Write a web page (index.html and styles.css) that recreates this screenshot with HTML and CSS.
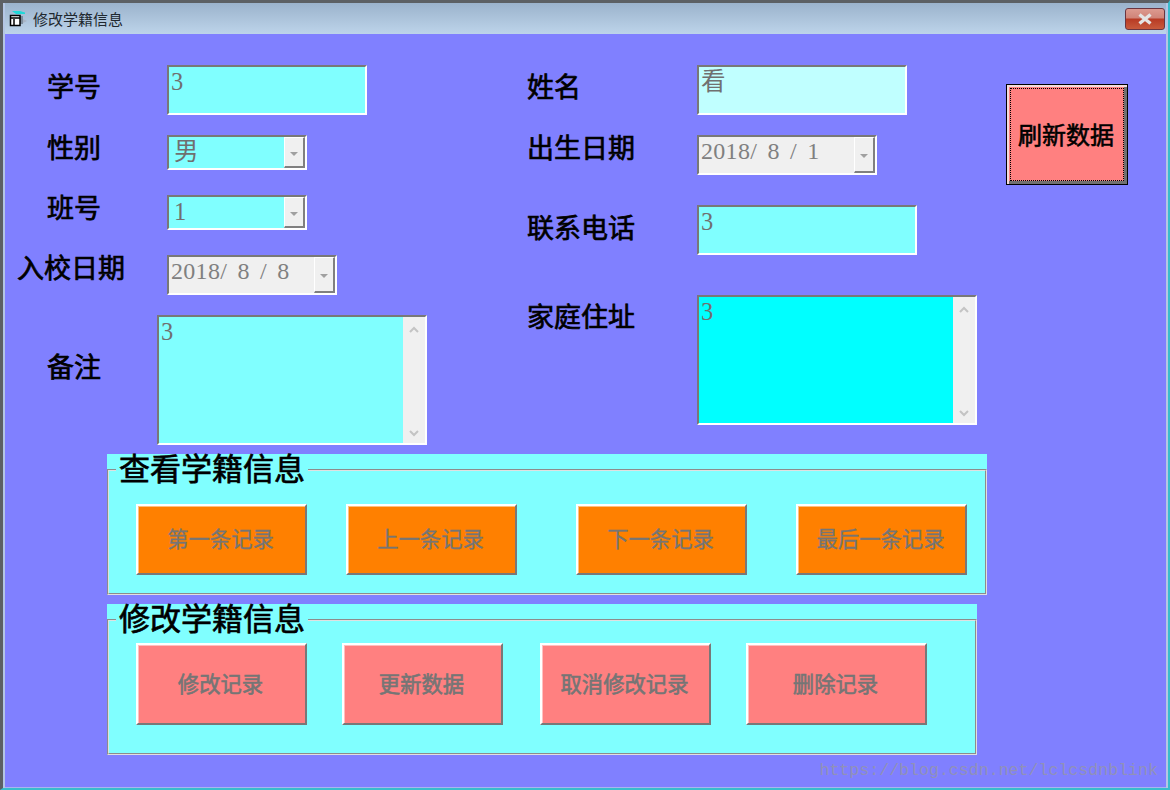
FILE: index.html
```html
<!DOCTYPE html>
<html lang="zh-CN">
<head>
  <meta charset="UTF-8">
  <title>修改学籍信息</title>
  <link rel="stylesheet" href="styles.css">
</head>
<body>

<div class="window">
  <div class="title-bar">
    <svg class="title-icon" width="19" height="16" viewBox="0 0 19 16">
      <path d="M3 0h8l5 1.500v1.500H7z" fill="#20d8d8"/>
      <path d="M11 5h3v8h-3z" fill="#7c8c9c"/>
      <path d="M14 8l4 2l-4 2z" fill="#a8b4c4"/>
      <rect x="1.500" y="4.500" width="9.500" height="10" fill="#fff" stroke="#000" stroke-width="1.500"/>
      <path d="M1 7h10M5 8v6" stroke="#000" stroke-width="1.500" fill="none"/>
    </svg>
    <span class="title-text">修改学籍信息</span>
    <div class="close-btn">
      <svg width="16" height="12" viewBox="0 0 16 12">
        <path d="M2.500 1.500l11 9M13.500 1.500l-11 9" stroke="#e4e4e4" stroke-width="3.400" fill="none"/>
      </svg>
    </div>
  </div>

  <div class="form">
    <div class="top">
      <!-- left column -->
      <div class="col-left">
        <div class="row">
          <div class="label label-left indent pad-9">学号</div>
          <div class="field text-field w-200 h-50">3</div>
        </div>
        <div class="row gap-20">
          <div class="label label-left indent">性别</div>
          <div class="field combo w-140 h-35">
            <span class="combo-text">男</span>
            <div class="combo-btn"><i class="arrow"></i></div>
          </div>
        </div>
        <div class="row gap-25">
          <div class="label label-left indent">班号</div>
          <div class="field combo w-140 h-35">
            <span class="combo-text">1</span>
            <div class="combo-btn"><i class="arrow"></i></div>
          </div>
        </div>
        <div class="row gap-25">
          <div class="label label-left">入校日期</div>
          <div class="field combo date w-170 h-40">
            <span class="combo-text">2018/ 8 / 8</span>
            <div class="combo-btn"><i class="arrow"></i></div>
          </div>
        </div>
        <div class="row gap-20">
          <div class="label label-note indent pad-39">备注</div>
          <div class="field memo w-270 h-130">
            <div class="memo-text">3</div>
            <div class="scrollbar">
              <svg width="10" height="7" viewBox="0 0 10 7"><path d="M1 6l4-4l4 4" stroke="#c4c4c4" stroke-width="2" fill="none"/></svg>
              <svg width="10" height="7" viewBox="0 0 10 7"><path d="M1 1l4 4l4-4" stroke="#c4c4c4" stroke-width="2" fill="none"/></svg>
            </div>
          </div>
        </div>
      </div>

      <!-- right column -->
      <div class="col-right">
        <div class="row">
          <div class="label label-right pad-9">姓名</div>
          <div class="field text-field pale w-210 h-50">看</div>
        </div>
        <div class="row gap-20">
          <div class="label label-right">出生日期</div>
          <div class="field combo date w-180 h-40">
            <span class="combo-text">2018/ 8 / 1</span>
            <div class="combo-btn"><i class="arrow"></i></div>
          </div>
        </div>
        <div class="row gap-30">
          <div class="label label-right pad-10">联系电话</div>
          <div class="field text-field w-220 h-50">3</div>
        </div>
        <div class="row gap-40">
          <div class="label label-right pad-9">家庭住址</div>
          <div class="field memo aqua w-280 h-130">
            <div class="memo-text">3</div>
            <div class="scrollbar">
              <svg width="10" height="7" viewBox="0 0 10 7"><path d="M1 6l4-4l4 4" stroke="#c4c4c4" stroke-width="2" fill="none"/></svg>
              <svg width="10" height="7" viewBox="0 0 10 7"><path d="M1 1l4 4l4-4" stroke="#c4c4c4" stroke-width="2" fill="none"/></svg>
            </div>
          </div>
        </div>
      </div>

      <div class="refresh"><div class="refresh-inner">刷新数据</div></div>
    </div>

    <div class="group group-view">
      <fieldset class="frame">
        <legend>查看学籍信息</legend>
        <div class="btn-row view-row">
          <div class="btn orange w-171">第一条记录</div>
          <div class="btn orange w-171 ml-39">上一条记录</div>
          <div class="btn orange w-171 ml-59">下一条记录</div>
          <div class="btn orange w-171 ml-49">最后一条记录</div>
        </div>
      </fieldset>
    </div>

    <div class="group group-edit">
      <fieldset class="frame">
        <legend>修改学籍信息</legend>
        <div class="btn-row edit-row">
          <div class="btn red w-171">修改记录</div>
          <div class="btn red w-161 ml-35">更新数据</div>
          <div class="btn red w-171 ml-37">取消修改记录</div>
          <div class="btn red w-181 ml-35">删除记录</div>
        </div>
      </fieldset>
    </div>

    <div class="watermark">https://blog.csdn.net/lclcsdnblink</div>
  </div>
</div>

</body>
</html>
```

FILE: styles.css
```css
* {
  box-sizing: border-box;
}

html, body {
  margin: 0;
  height: 100%;
  overflow: hidden;
}

body {
  font-family: "Liberation Serif", "Noto Sans CJK SC", serif;
  background: #8080ff;
}

.window {
  width: 1170px;
  height: 790px;
  display: flex;
  flex-direction: column;
  padding: 0 2px 0 2px;
  background: #b4c6e4;
  border-style: solid;
  border-width: 3px 2px 2px 3px;
  border-top-color: #5c6064;
  border-left-color: #5c6064;
  border-right-color: #38bccc;
  border-bottom-color: #38bccc;
}

.title-bar {
  height: 31px;
  flex: none;
  display: flex;
  align-items: center;
  background: linear-gradient(#9bb3cc, #bdd4ea);
  position: relative;
}

.title-icon {
  margin-left: 4px;
}

.title-text {
  margin-left: 5px;
  font-family: "Noto Sans CJK SC", sans-serif;
  font-size: 15px;
  color: #20282f;
}

.close-btn {
  position: absolute;
  right: 1px;
  top: 5px;
  width: 40px;
  height: 22px;
  display: flex;
  align-items: center;
  justify-content: center;
  border: 1px solid #6b3540;
  border-radius: 3px;
  background: linear-gradient(#dc9a90 0, #d08478 45%, #b83a24 50%, #c85a3c 100%);
}

.form {
  flex: 1;
  background: #8080ff;
  position: relative;
  box-shadow: inset 0 -1px 0 #a8b4f0;
}

.top {
  height: 420px;
  padding: 31px 0 0 13px;
  display: flex;
  align-items: flex-start;
}

.col-left {
  width: 510px;
  flex: none;
}

.col-right {
  width: 478px;
  flex: none;
}

.row {
  display: flex;
  align-items: flex-start;
}

.gap-20 { margin-top: 20px; }
.gap-25 { margin-top: 25px; }
.gap-30 { margin-top: 30px; }
.gap-40 { margin-top: 40px; }

.label {
  flex: none;
  margin: -1px 1px 0 -1px;
  font-family: "Noto Sans CJK SC", sans-serif;
  font-size: 27px;
  line-height: 26px;
  color: #000;
  -webkit-text-stroke: 0.7px #000;
}

.label-left { width: 149px; }
.label-note { width: 139px; }
.label-right { width: 169px; }
.indent { padding-left: 30px; }
.pad-9 { padding-top: 9px; }
.pad-10 { padding-top: 10px; }
.pad-39 { padding-top: 39px; }

.w-140 { width: 140px; }
.w-161 { width: 161px; }
.w-170 { width: 170px; }
.w-171 { width: 171px; }
.w-180 { width: 180px; }
.w-181 { width: 181px; }
.w-200 { width: 200px; }
.w-210 { width: 210px; }
.w-220 { width: 220px; }
.w-270 { width: 270px; }
.w-280 { width: 280px; }
.h-35 { height: 35px; }
.h-40 { height: 40px; }
.h-50 { height: 50px; }
.h-130 { height: 130px; }

/* sunken VB control */
.field {
  flex: none;
  background: #80ffff;
  border-style: solid;
  border-width: 2px;
  border-color: #787878 #fff #fff #787878;
  color: #707070;
  font-size: 24.5px;
  line-height: 28px;
}

.text-field {
  padding: 1px 0 0 2px;
}

.pale {
  background: #c0ffff;
}

.combo {
  display: flex;
  justify-content: space-between;
}

.combo-text {
  padding-left: 5px;
  padding-top: 1px;
  white-space: pre;
}

.date {
  background: #f0f0f0;
}

.date .combo-text {
  padding-left: 2px;
  padding-top: 0;
  font-size: 24px;
  letter-spacing: 0.3px;
  word-spacing: 4px;
  color: #808080;
}

.combo-btn {
  width: 21px;
  display: flex;
  align-items: center;
  justify-content: center;
  background: #f0f0f0;
  border-style: solid;
  border-width: 1px 2px 2px 1px;
  border-color: #fff #808080 #808080 #fff;
}

.arrow {
  width: 0;
  height: 0;
  margin-top: 3px;
  border-left: 4px solid transparent;
  border-right: 4px solid transparent;
  border-top: 4px solid #a0a0a0;
}

.memo {
  display: flex;
}

.aqua {
  background: #00ffff;
}

.memo-text {
  flex: 1;
  padding: 1px 0 0 2px;
}

.scrollbar {
  width: 22px;
  flex: none;
  padding: 9px 0 6px;
  display: flex;
  flex-direction: column;
  align-items: center;
  justify-content: space-between;
  background: #f0f0f0;
}

.refresh {
  flex: none;
  width: 122px;
  height: 101px;
  margin-top: 19px;
  padding: 3px;
  background: #ff8080;
  border: 1px solid #000;
  box-shadow: inset 2px 2px 0 #f4dcdc, inset -3px -3px 0 #707070;
}

.refresh-inner {
  width: 100%;
  height: 100%;
  padding: 0 2px 2px 0;
  display: flex;
  align-items: center;
  justify-content: center;
  border: 1px dotted #000;
  font-family: "Noto Sans CJK SC", sans-serif;
  font-size: 24px;
  color: #000;
  -webkit-text-stroke: 0.6px #000;
}

.group {
  margin-left: 102px;
  background: #80ffff;
}

.group-view {
  width: 880px;
  height: 141px;
}

.group-edit {
  width: 870px;
  height: 151px;
  margin-top: 9px;
}

.frame {
  height: 100%;
  margin: 0;
  padding: 0 0 0 27px;
  border: 2px groove #e0e0e0;
}

.frame legend {
  margin-left: -20px;
  padding: 0 3px 6px 3px;
  font-family: "Noto Sans CJK SC", sans-serif;
  font-size: 31px;
  line-height: 26px;
  color: #000;
  -webkit-text-stroke: 0.7px #000;
}

.btn-row {
  display: flex;
}

.view-row { margin-top: 18px; }
.view-row .btn { height: 71px; }
.edit-row { margin-top: 7px; }
.edit-row .btn { height: 82px; }

.ml-35 { margin-left: 35px; }
.ml-37 { margin-left: 37px; }
.ml-39 { margin-left: 39px; }
.ml-49 { margin-left: 49px; }
.ml-59 { margin-left: 59px; }

.btn {
  flex: none;
  padding: 0 2px 4px 0;
  display: flex;
  align-items: center;
  justify-content: center;
  border-style: solid;
  border-width: 2px;
  border-color: #fff #787878 #787878 #fff;
  font-family: "Noto Sans CJK SC", sans-serif;
  font-size: 21.33px;
  color: #757575;
  -webkit-text-stroke: 0.3px #757575;
}

.orange {
  background: #ff8000;
  box-shadow: inset 1px 1px 0 #ffc080;
}

.red {
  background: #ff8080;
  box-shadow: inset 1px 1px 0 #ffc0c0;
  -webkit-text-stroke: 0.6px #757575;
}

.watermark {
  position: absolute;
  right: 8px;
  bottom: 8px;
  font-family: "Liberation Mono", monospace;
  font-size: 16.6px;
  color: rgba(150, 150, 165, 0.8);
}
```
